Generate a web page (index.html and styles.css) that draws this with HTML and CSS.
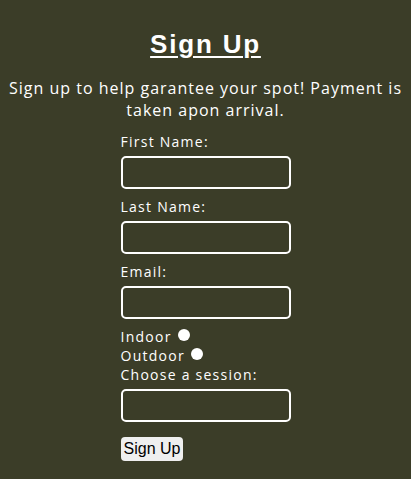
FILE: index.html
```html
<!DOCTYPE html>
<html>
<head>
<meta charset="utf-8">
<link rel="stylesheet" href="styles.css">
</head>
<body>
<main class="page">
  <h1 class="title">Sign Up</h1>
  <p class="intro">Sign up to help garantee your spot! Payment is taken apon arrival.</p>
  <form class="form">
    <label class="label" for="first">First Name:</label>
    <input class="field" id="first" type="text">
    <label class="label" for="last">Last Name:</label>
    <input class="field" id="last" type="text">
    <label class="label" for="email">Email:</label>
    <input class="field" id="email" type="email">
    <div class="radio-row"><label class="label-inline" for="indoor">Indoor</label> <input class="radio" id="indoor" type="radio" name="place"></div>
    <div class="radio-row"><label class="label-inline" for="outdoor">Outdoor</label> <input class="radio" id="outdoor" type="radio" name="place"></div>
    <label class="label tight" for="session">Choose a session:</label>
    <input class="field" id="session" type="text">
    <div><button class="button" type="button">Sign Up</button></div>
  </form>
</main>
</body>
</html>
```
FILE: styles.css
```css
html, body {
  margin: 0;
  padding: 0;
  background: #3b3d28;
}
body {
  color: #ffffff;
  font-family: "Open Sans", sans-serif;
}
.page {
  display: flex;
  flex-direction: column;
  align-items: center;
  padding-top: 29px;
}
.title {
  margin: 0;
  font-family: "Liberation Sans", Arial, sans-serif;
  font-weight: bold;
  font-size: 26px;
  letter-spacing: 1.8px;
  text-decoration: underline;
  text-decoration-thickness: 2px;
  text-underline-offset: 3px;
  line-height: 30px;
}
.intro {
  margin: 18px 0 11px;
  font-size: 16px;
  letter-spacing: 1px;
  line-height: 22px;
  text-align: center;
  padding: 0 6px;
}
.form {
  display: flex;
  flex-direction: column;
  width: 170px;
}
.label, .label-inline {
  font-size: 14px;
  letter-spacing: 1.25px;
  line-height: 19px;
}
.label {
  display: block;
}
.field {
  box-sizing: border-box;
  width: 170px;
  height: 33px;
  margin: 5px 0 8px;
  background: transparent;
  border: 2px solid #ffffff;
  border-radius: 5px;
  color: #fff;
}
.radio-row {
  display: flex;
  align-items: center;
  height: 19px;
  gap: 6px;
}
.radio {
  appearance: none;
  width: 12px;
  height: 12px;
  margin: 0 0 4px;
  border-radius: 50%;
  background: #ffffff;
  border: none;
}
.button {
  margin-top: 7px;
  font-family: "Liberation Sans", Arial, sans-serif;
  font-size: 16px;
  color: #000;
  background: #efefef;
  border: none;
  border-radius: 4px;
  padding: 2px 3px;
  height: 24px;
}
```
